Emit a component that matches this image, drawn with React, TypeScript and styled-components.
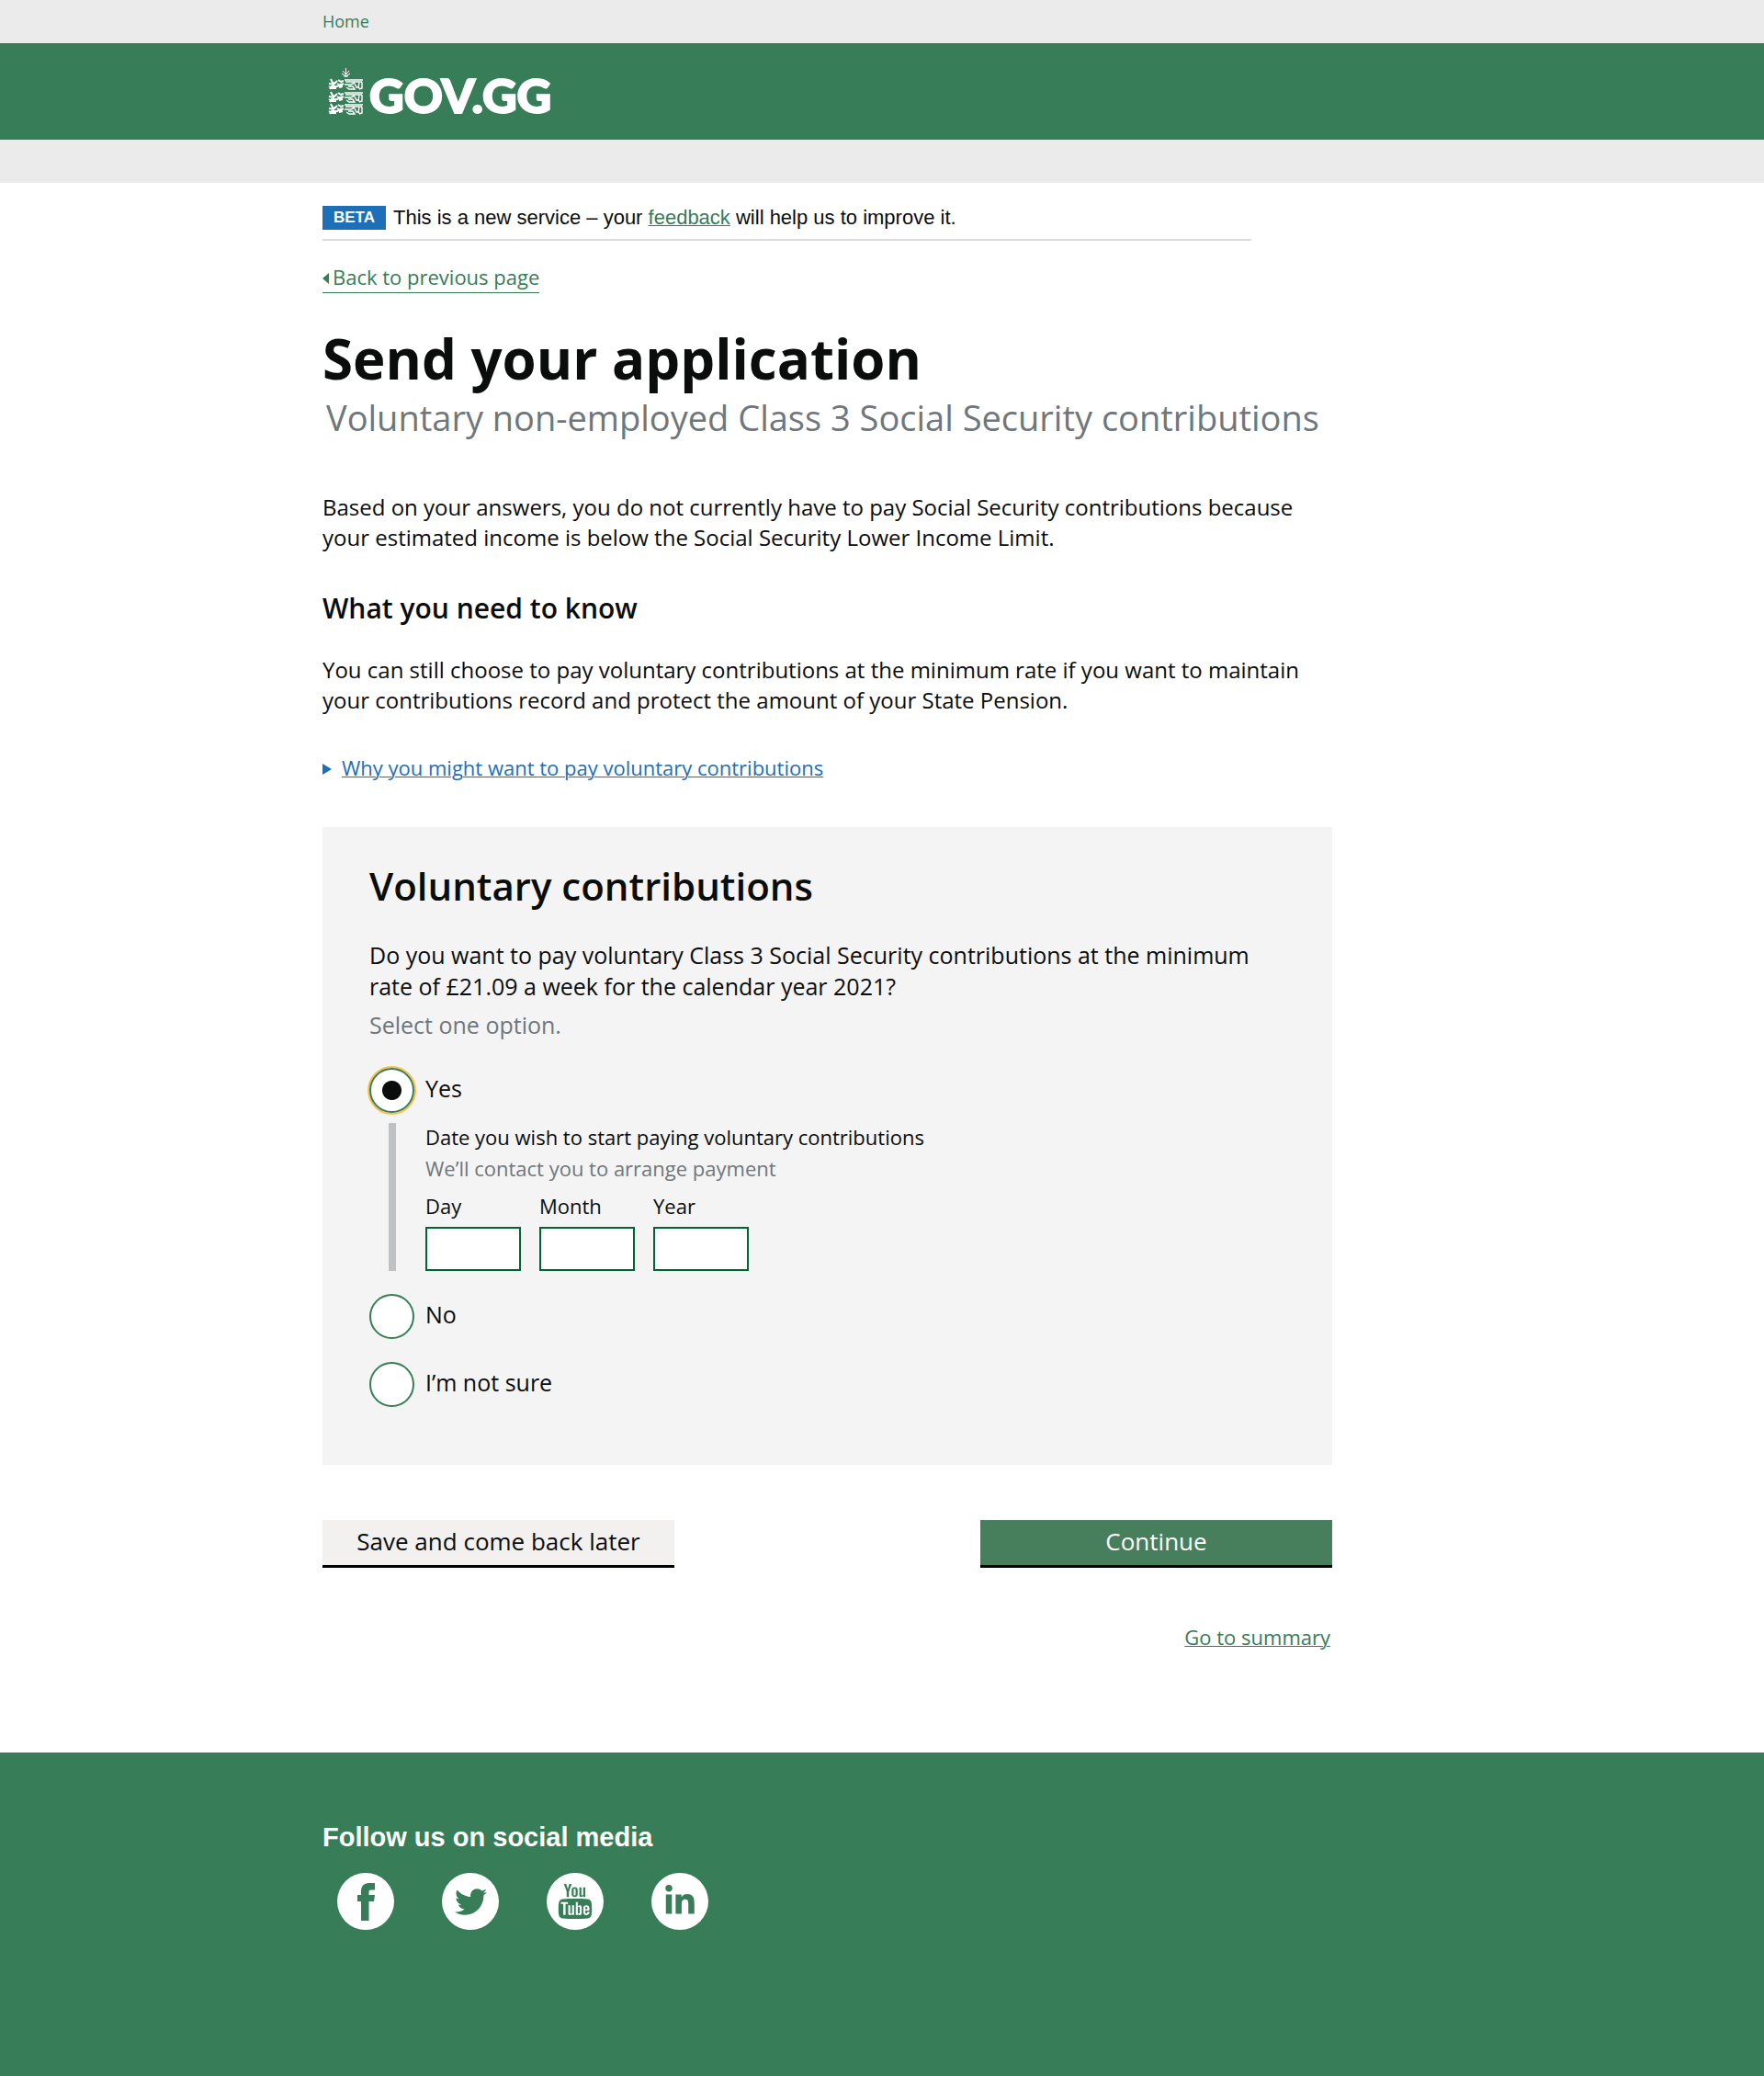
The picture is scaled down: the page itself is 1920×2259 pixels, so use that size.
import React, { useState } from 'react';
import styled, { createGlobalStyle } from 'styled-components';
import { FaTwitter, FaLinkedinIn } from 'react-icons/fa';
import { TfiYoutube } from 'react-icons/tfi';

const color = {
  green: '#377d57',
  grey: '#ebebeb',
  ink: '#0b0c0c',
  muted: '#6f777b',
  blue: '#1d70b8',
  panel: '#f4f4f4',
};

const GlobalStyle = createGlobalStyle`
  *, *::before, *::after { box-sizing: border-box; }
  body {
    margin: 0;
    background: #fff;
    color: ${color.ink};
    font-family: 'Open Sans', 'Noto Sans', sans-serif;
  }
  h1, h2, p, ul, fieldset, legend { margin: 0; padding: 0; border: 0; }
  button, input { font: inherit; }
`;

const Width = styled.div`
  max-width: 1218px;
  margin: 0 auto;
`;

const Strip = styled.nav`
  background: ${color.grey};
  padding: 11px 0 12px;
`;

const HomeLink = styled.a`
  display: block;
  width: fit-content;
  color: ${color.green};
  font-size: 18px;
  line-height: 24px;
  text-decoration: none;
`;

const Banner = styled.header`
  background: ${color.green};
  border-bottom: 47px solid ${color.grey};
`;

const Brand = styled.a`
  display: flex;
  align-items: center;
  gap: 6px;
  width: fit-content;
  height: 105px;
  padding-left: 6px;
  color: #fff;
  font-family: Lato, sans-serif;
  font-size: 52px;
  font-weight: 900;
  line-height: 60px;
  text-decoration: none;
`;

const BrandName = styled.span`
  padding-top: 6px;
  -webkit-text-stroke: 2px #fff;
`;

const Column = styled.main`
  max-width: 1099px;
  padding: 25px 0 111px;
`;

const Phase = styled.div`
  display: flex;
  align-items: center;
  gap: 8px;
  max-width: 1011px;
  padding-bottom: 10px;
  border-bottom: 2px solid #dcdcdc;
  font-family: 'Liberation Sans', Arial, sans-serif;
  font-size: 22px;
  line-height: 26px;
`;

const PhaseTag = styled.strong`
  padding: 0 12px;
  background: ${color.blue};
  color: #fff;
  font-size: 17px;
  line-height: 26px;
`;

const TextLink = styled.a<{ $blue?: boolean }>`
  color: ${(p) => (p.$blue ? color.blue : color.green)};
  text-decoration-thickness: 1px;
`;

const BackLink = styled.a`
  display: flex;
  align-items: center;
  gap: 4px;
  width: fit-content;
  margin-top: 24px;
  padding-bottom: 2px;
  border-bottom: 1px solid ${color.green};
  color: ${color.green};
  font-size: 22px;
  line-height: 30px;
  text-decoration: none;
`;

const Triangle = styled.span<{ $left?: boolean }>`
  margin-top: 4px;
  border: 6px solid transparent;
  ${(p) =>
    p.$left
      ? 'border-left-width: 0; border-right: 7px solid currentColor;'
      : 'border-right-width: 0; border-left: 10px solid currentColor;'}
`;

const Title = styled.h1`
  margin-top: 33px;
  font-size: 60px;
  font-weight: 700;
  line-height: 76px;
`;

const Subtitle = styled.p`
  padding-left: 4px;
  color: ${color.muted};
  font-size: 38px;
  line-height: 52px;
`;

const Paragraph = styled.p<{ $top: number }>`
  margin-top: ${(p) => p.$top}px;
  font-size: 24px;
  line-height: 33px;
`;

const Heading = styled.h2`
  margin-top: 41px;
  font-size: 30px;
  font-weight: 600;
  line-height: 40px;
`;

const Disclosure = styled.div`
  display: flex;
  align-items: center;
  gap: 11px;
  margin-top: 42px;
  color: ${color.blue};
  font-size: 22px;
  line-height: 30px;
`;

const Panel = styled.section`
  margin-top: 50px;
  padding: 36px 51px 63px;
  background: ${color.panel};
`;

const PanelTitle = styled.h2`
  font-size: 42px;
  font-weight: 600;
  line-height: 56px;
`;

const Question = styled.legend`
  padding-top: 30px;
  font-size: 25px;
  line-height: 34px;
`;

const Hint = styled.p<{ $small?: boolean }>`
  margin-top: ${(p) => (p.$small ? 4 : 8)}px;
  color: ${color.muted};
  font-size: ${(p) => (p.$small ? 22 : 25)}px;
  line-height: ${(p) => (p.$small ? 30 : 34)}px;
`;

const Option = styled.label<{ $top: number }>`
  display: flex;
  align-items: center;
  gap: 12px;
  width: fit-content;
  margin-top: ${(p) => p.$top}px;
  font-size: 25px;
  line-height: 34px;
`;

const OptionText = styled.span`
  padding-bottom: 6px;
`;

const Radio = styled.input`
  appearance: none;
  flex: none;
  width: 49px;
  height: 49px;
  margin: 0;
  border: 2px solid ${color.green};
  border-radius: 50%;
  background: #fff;
  &:checked {
    background: radial-gradient(circle, ${color.ink} 10px, #fff 11px);
    box-shadow: 0 0 0 2px #ffbf47;
  }
`;

const Conditional = styled.div`
  margin: 11px 0 0 21px;
  padding-left: 32px;
  border-left: 8px solid #bfc1c3;
`;

const DateFields = styled.fieldset`
  font-size: 22px;
  line-height: 30px;
`;

const FieldRow = styled.div`
  display: flex;
  gap: 20px;
  margin-top: 11px;
`;

const Field = styled.label`
  display: grid;
  gap: 8px;
`;

const DateInput = styled.input`
  width: 104px;
  height: 48px;
  padding: 0 8px;
  border: 2px solid #006435;
  border-radius: 0;
  background: #fff;
`;

const Actions = styled.div`
  display: flex;
  justify-content: space-between;
  margin-top: 60px;
`;

const Button = styled.button<{ $primary?: boolean }>`
  width: 383px;
  height: 52px;
  padding: 0 0 3px;
  border: 0;
  border-bottom: 3px solid #000;
  background: ${(p) => (p.$primary ? '#477e5b' : '#f2f1f0')};
  color: ${(p) => (p.$primary ? '#fff' : color.ink)};
  font-size: 26px;
  line-height: 34px;
`;

const Summary = styled.p`
  margin-top: 60px;
  padding-right: 2px;
  font-size: 22px;
  line-height: 30px;
  text-align: right;
`;

const Footer = styled.footer`
  padding: 76px 0 159px;
  background: ${color.green};
  color: #fff;
`;

const FooterTitle = styled.h2`
  font-family: 'Liberation Sans', Arial, sans-serif;
  font-size: 29px;
  font-weight: 700;
  line-height: 32px;
`;

const Social = styled.ul`
  display: flex;
  gap: 52px;
  margin-top: 23px;
  padding-left: 16px;
  list-style: none;
`;

const SocialLink = styled.a`
  display: grid;
  place-items: center;
  width: 62px;
  height: 62px;
  border-radius: 50%;
  background: #fff;
  color: ${color.green};
`;

const YoutubeMark = styled(TfiYoutube)`
  width: 44px;
  height: 38px;
`;

const lions = [12, 26, 39];

function Crest() {
  return (
    <svg width="39" height="52" viewBox="0 0 39 52" fill="none" stroke="#fff" aria-hidden="true">
      <path d="M19.500 0v10M16 3l3.500 4 3.500-4M15 6l4.500 3 4.500-3M17 9h5" strokeWidth="1" />
      {lions.map((y) => (
        <g key={y} transform={`translate(0 ${y})`}>
          <path d="M3 0l2 4 3 1M1 5l5 1 4-4M2 11l2-3 6 0 5-3M1 8l3 2h5" strokeWidth="2" />
          <path d="M11 1l3 2 3-1M10 5l3 2 4-2M12 9l4-1" strokeWidth="2" />
          <path d="M18 1h20M19 3h18M18 6h7l4-2M37 3v7l-3 1M34 4l-1 5 2 2M29 5l2 4h3M20 9l3 2h6l-2-3h-5" strokeWidth="1.400" />
        </g>
      ))}
    </svg>
  );
}

function FacebookMark() {
  return (
    <svg width="19" height="42" viewBox="0 0 19 42" fill="currentColor" aria-hidden="true">
      <path d="M4 42V21H0v-7h4V10.500C4 4.500 7 1 12.500 1H19v7.500h-4c-2 0-2.500.8-2.500 2.500v3H19l-1 7h-5.500v21z" />
    </svg>
  );
}

const dateParts = ['Day', 'Month', 'Year'];

export default function App() {
  const [choice, setChoice] = useState('yes');
  const radio = (value: string) => (
    <Radio type="radio" name="voluntary" value={value} checked={choice === value} onChange={() => setChoice(value)} />
  );

  return (
    <>
      <GlobalStyle />
      <Strip>
        <Width>
          <HomeLink href="#home">Home</HomeLink>
        </Width>
      </Strip>
      <Banner>
        <Width>
          <Brand href="#gov">
            <Crest />
            <BrandName>GOV.GG</BrandName>
          </Brand>
        </Width>
      </Banner>
      <Width>
        <Column>
          <Phase>
            <PhaseTag>BETA</PhaseTag>
            <span>
              This is a new service – your <TextLink href="#feedback">feedback</TextLink> will help us to improve it.
            </span>
          </Phase>
          <BackLink href="#back">
            <Triangle $left />
            Back to previous page
          </BackLink>
          <Title>Send your application</Title>
          <Subtitle>Voluntary non-employed Class 3 Social Security contributions</Subtitle>
          <Paragraph $top={55}>
            Based on your answers, you do not currently have to pay Social Security contributions because your estimated
            income is below the Social Security Lower Income Limit.
          </Paragraph>
          <Heading>What you need to know</Heading>
          <Paragraph $top={30}>
            You can still choose to pay voluntary contributions at the minimum rate if you want to maintain your
            contributions record and protect the amount of your State Pension.
          </Paragraph>
          <Disclosure>
            <Triangle />
            <TextLink $blue href="#why">Why you might want to pay voluntary contributions</TextLink>
          </Disclosure>

          <Panel>
            <PanelTitle>Voluntary contributions</PanelTitle>
            <fieldset>
              <Question>
                Do you want to pay voluntary Class 3 Social Security contributions at the minimum rate of £21.09 a week
                for the calendar year 2021?
              </Question>
              <Hint>Select one option.</Hint>
              <Option $top={30}>
                {radio('yes')}
                <OptionText>Yes</OptionText>
              </Option>
              <Conditional>
                <DateFields>
                  <legend>Date you wish to start paying voluntary contributions</legend>
                  <Hint $small>We’ll contact you to arrange payment</Hint>
                  <FieldRow>
                    {dateParts.map((part) => (
                      <Field key={part}>
                        {part}
                        <DateInput type="text" inputMode="numeric" />
                      </Field>
                    ))}
                  </FieldRow>
                </DateFields>
              </Conditional>
              <Option $top={25}>
                {radio('no')}
                <OptionText>No</OptionText>
              </Option>
              <Option $top={25}>
                {radio('unsure')}
                <OptionText>I’m not sure</OptionText>
              </Option>
            </fieldset>
          </Panel>

          <Actions>
            <Button type="button">Save and come back later</Button>
            <Button type="button" $primary>Continue</Button>
          </Actions>
          <Summary>
            <TextLink href="#summary">Go to summary</TextLink>
          </Summary>
        </Column>
      </Width>
      <Footer>
        <Width>
          <FooterTitle>Follow us on social media</FooterTitle>
          <Social>
            <li><SocialLink href="#facebook" aria-label="Facebook"><FacebookMark /></SocialLink></li>
            <li><SocialLink href="#twitter" aria-label="Twitter"><FaTwitter size={35} /></SocialLink></li>
            <li><SocialLink href="#youtube" aria-label="YouTube"><YoutubeMark preserveAspectRatio="none" /></SocialLink></li>
            <li><SocialLink href="#linkedin" aria-label="LinkedIn"><FaLinkedinIn size={36} /></SocialLink></li>
          </Social>
        </Width>
      </Footer>
    </>
  );
}
